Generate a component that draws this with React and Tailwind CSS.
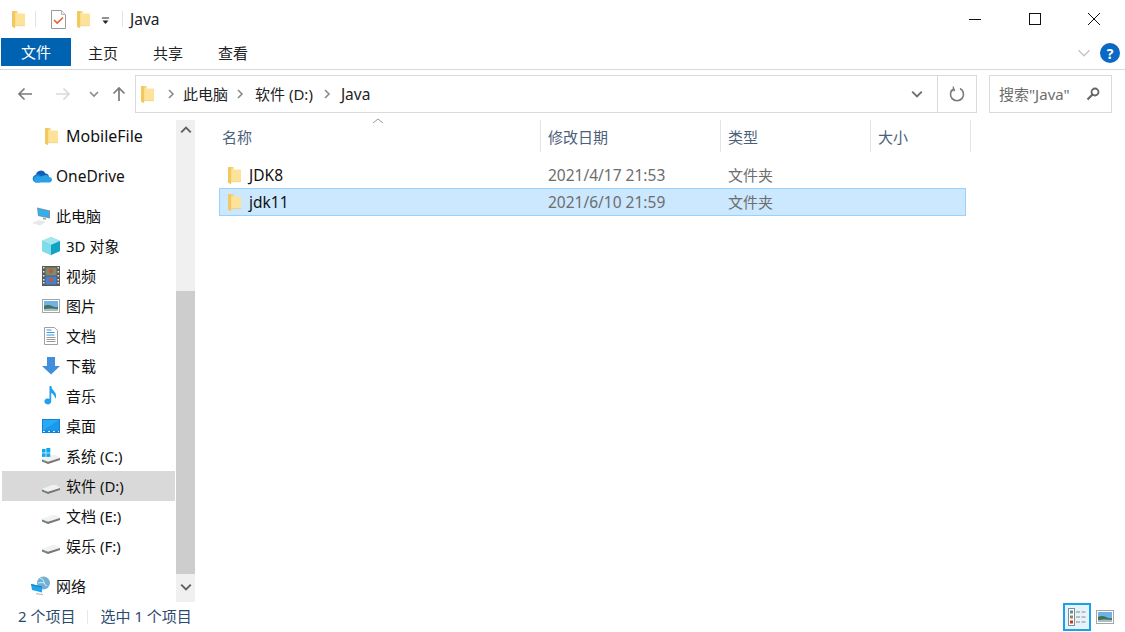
import React from "react";

const FONT = "font-['Noto_Sans','Noto_Sans_CJK_SC',sans-serif]";

function Folder({ className = "" }) {
  return (
    <svg width="13" height="17" viewBox="0 0 13 17" className={`shrink-0 ${className}`}>
      <path d="M3 2.500h9.500a.5.5 0 0 1 .5.500v11a.5.5 0 0 1-.5.5H3z" fill="#fde39a" />
      <path d="M0 .6Q0 0 .6 0H5.500v2.500H3V14.500h9.500q.5 0 .5-.5v.5H3V17L.6 16Q0 15.800 0 15.200z" fill="#f7d573" />
      <path d="M0 .6Q0 0 .6 0H3.200V17L.6 16Q0 15.800 0 15.200z" fill="#f3c95f" />
      <path d="M3.200 14.500H13v.6H3.200z" fill="#ecc25a" />
    </svg>
  );
}

function CheckDoc() {
  return (
    <svg width="15" height="19" viewBox="0 0 15 19" className="shrink-0">
      <path d="M.5.500h10l4 4v14H.5z" fill="#fff" stroke="#9a9a9a" />
      <path d="M10.500.500v4h4" fill="#eee" stroke="#b5b5b5" />
      <path d="M3 10l3.200 3L12 7.500" fill="none" stroke="#e8602c" strokeWidth="1.700" />
    </svg>
  );
}

function Chevron({ color = "#8a8a8a", dir = "right", size = 10, sw = 1.6 }) {
  const d = {
    right: "M3 1l4 4-4 4",
    down: "M1 3l4 4 4-4",
    up: "M1 7l4-4 4 4",
  }[dir];
  return (
    <svg width={size} height={size} viewBox="0 0 10 10" className="shrink-0">
      <path d={d} fill="none" stroke={color} strokeWidth={sw} />
    </svg>
  );
}

function Arrow({ color, rot = 0, size = 16 }) {
  return (
    <svg width={size} height={size} viewBox="0 0 16 16" style={{ transform: `rotate(${rot}deg)` }} className="shrink-0">
      <path d="M15 8H2M7.500 2.500L2 8l5.500 5.500" fill="none" stroke={color} strokeWidth="1.700" />
    </svg>
  );
}

function Drive({ win }) {
  return (
    <svg width="20" height="22" viewBox="0 0 20 22" className="shrink-0">
      <path d="M1 14L11 10h4l4 2.500V15L7 19 1 16.500z" fill="#f1f1f1" />
      <path d="M1 14.500l6 2.300L19 13v2L7 19 1 16.500z" fill="#777" />
      <path d="M3.500 16l2 .8v1l-2-.8z" fill="#3fbf4f" />
      {win && (
        <g fill="#12a5f0">
          <rect x="1" y="4" width="3.600" height="3.600" />
          <rect x="5.300" y="3" width="4" height="4.600" />
          <rect x="1" y="8.300" width="3.600" height="3.600" />
          <rect x="5.300" y="8.300" width="4" height="3.600" />
        </g>
      )}
    </svg>
  );
}

const icons = {
  folder: <Folder />,
  cloud: (
    <svg width="21" height="14" viewBox="0 0 21 14" className="shrink-0">
      <path d="M5 7a5 5 0 0 1 9.500-2.500A4 4 0 0 1 18 8l-8 2z" fill="#0f5fb5" />
      <path d="M4.500 13.500A4 4 0 0 1 4 6a4 4 0 0 1 5.500 1l4 2-5 4.500z" fill="#1a85d6" />
      <path d="M4.500 13.500H18a2.700 2.700 0 0 0 .5-5.400A4 4 0 0 0 13 6.500a5 5 0 0 0-4 1.500 3.500 3.500 0 0 0-4.500 5.500z" fill="#2aa0e6" />
    </svg>
  ),
  pc: (
    <svg width="20" height="19" viewBox="0 0 20 19" className="shrink-0">
      <path d="M6 .5l13 3v8L7 9z" fill="#7f8f9c" />
      <path d="M7 1.700l11 2.500v6L7 8z" fill="#2fb0f0" />
      <path d="M12 10.500l3 .7v1.500l-3-.5z" fill="#9aa3a9" />
      <path d="M1 16l7-3 7 2-6 3.500z" fill="#e6e8ea" />
    </svg>
  ),
  cube: (
    <svg width="18" height="18" viewBox="0 0 18 18" className="shrink-0">
      <path d="M9 0l9 4v10l-9 4-9-4V4z" fill="#4fc6e0" />
      <path d="M9 0l9 4-9 4-9-4z" fill="#a4e6f0" />
      <path d="M0 4l9 4v10l-9-4z" fill="#7fdcea" />
      <path d="M18 4L9 8v10l9-4z" fill="#13a3c2" />
    </svg>
  ),
  film: (
    <svg width="18" height="20" viewBox="0 0 18 20" className="shrink-0">
      <rect width="18" height="20" fill="#5a5a5a" />
      <rect x="3.500" y="1.500" width="11" height="8" fill="#7d8c6a" />
      <rect x="3.500" y="10.500" width="11" height="8" fill="#3f82d8" />
      <circle cx="9" cy="5" r="2.200" fill="#c8553d" />
      <circle cx="9" cy="14" r="2.200" fill="#c8553d" />
      <g fill="#e9e9e9">
        {[2, 6, 10, 14, 17].map((y) => (
          <g key={y}>
            <rect x="1" y={y - 1} width="1.500" height="1.500" />
            <rect x="15.500" y={y - 1} width="1.500" height="1.500" />
          </g>
        ))}
      </g>
    </svg>
  ),
  pic: (
    <svg width="18" height="14" viewBox="0 0 18 14" className="shrink-0">
      <rect x=".5" y=".5" width="17" height="13" fill="#fff" stroke="#a5a5a5" />
      <rect x="2" y="2" width="14" height="10" fill="#6fb2e6" />
      <path d="M2 7q4-2 8 0t6 1v4H2z" fill="#466e58" />
      <path d="M2 10q6-1 14 0v2H2z" fill="#a7c0c4" />
    </svg>
  ),
  doc: (
    <svg width="14" height="18" viewBox="0 0 14 18" className="shrink-0">
      <path d="M.5.500h10l3 3v14H.5z" fill="#fff" stroke="#a0a0a0" />
      <path d="M2.500 3h5M2.500 5.500h8M2.500 8h8" stroke="#2f9be0" strokeWidth="1.200" />
      <path d="M2.500 10.500h9M2.500 12.500h9M2.500 14.500h9" stroke="#9a9a9a" />
    </svg>
  ),
  down: (
    <svg width="18" height="18" viewBox="0 0 18 18" className="shrink-0">
      <path d="M5 0h8v9h5l-9 8.500L0 9h5z" fill="#3f8fdc" />
    </svg>
  ),
  music: (
    <svg width="14" height="20" viewBox="0 0 14 20" className="shrink-0">
      <path d="M5.500 0h1.700q.5 3.500 3.500 6 2.500 3 .5 7-.2-4-4-6.300V15.500a3.400 3 0 1 1-1.700-2.700z" fill="#1fa1ec" />
    </svg>
  ),
  desk: (
    <svg width="18" height="14" viewBox="0 0 18 14" className="shrink-0">
      <rect width="18" height="14" fill="#0f83d8" />
      <rect x="1" y="1" width="16" height="10.500" fill="#2aa9f5" />
      <path d="M1 11.500L17 1v10.500z" fill="#1b98ea" />
      <path d="M1 12.500h16" stroke="#cfeafc" strokeDasharray="2 3" />
    </svg>
  ),
  net: (
    <svg width="20" height="20" viewBox="0 0 20 20" className="shrink-0">
      <circle cx="12.500" cy="7" r="6.500" fill="#6fb0d4" />
      <path d="M9 2q4 1 4 4t3 4M7 7q3-1 6 0" stroke="#d5ebf5" fill="none" />
      <path d="M0 8l11 2.500v6L1 14z" fill="#1fa5ea" />
      <path d="M0 8l11 2.500v1L.2 9.200z" fill="#137fc0" />
      <path d="M5 17l7 1v1.200l-7-1z" fill="#b7c0c7" />
    </svg>
  ),
  c: <Drive win />,
  d: <Drive />,
};

const nav = [
  { label: "MobileFile", icon: "folder", depth: 2, mb: "mb-[10px]", size: "text-[16px]" },
  { label: "OneDrive", icon: "cloud", depth: 1, mb: "mb-[10px]", size: "translate-y-px text-[15.5px]" },
  { label: "此电脑", icon: "pc", depth: 1 },
  { label: "3D 对象", icon: "cube", depth: 2 },
  { label: "视频", icon: "film", depth: 2 },
  { label: "图片", icon: "pic", depth: 2 },
  { label: "文档", icon: "doc", depth: 2 },
  { label: "下载", icon: "down", depth: 2 },
  { label: "音乐", icon: "music", depth: 2 },
  { label: "桌面", icon: "desk", depth: 2 },
  { label: "系统 (C:)", icon: "c", depth: 2 },
  { label: "软件 (D:)", icon: "d", depth: 2, active: true },
  { label: "文档 (E:)", icon: "d", depth: 2 },
  { label: "娱乐 (F:)", icon: "d", depth: 2, mb: "mb-[10px]" },
  { label: "网络", icon: "net", depth: 1 },
];

function NavRow({ item }) {
  return (
    <div
      className={`flex h-[30px] items-center ${item.mb || ""} ${item.active ? "bg-[#d9d9d9]" : ""} ${
        item.depth === 2 ? "pl-[37px]" : "pl-[27px]"
      }`}
    >
      <span className="flex w-[24px] shrink-0 items-center justify-center">{icons[item.icon]}</span>
      <span className={`ml-[3px] whitespace-nowrap text-[#111] ${item.size || "text-[15px]"}`}>{item.label}</span>
    </div>
  );
}

function Sep({ className = "" }) {
  return <div className={`w-px shrink-0 bg-[#e3e3e3] ${className}`} />;
}

function HeaderCell({ label, w, children }) {
  return (
    <div className={`relative flex h-[32px] shrink-0 items-center border-r border-[#e5e5e5] pt-[2px] text-[15px] text-[#4c607a] ${w}`}>
      {label}
      {children}
    </div>
  );
}

function FileRow({ name, date, selected }) {
  return (
    <div
      className={`flex h-[28px] w-[747px] items-center border ${
        selected ? "border-[#99d1ff] bg-[#cce8ff]" : "border-transparent"
      }`}
    >
      <span className="ml-[6px] flex w-[16px] shrink-0 justify-center"><Folder /></span>
      <span className="ml-[7px] w-[299px] shrink-0 translate-y-px text-[15.5px] text-[#111]">{name}</span>
      <span className="w-[180px] shrink-0 translate-y-px whitespace-nowrap text-[15.5px] text-[#6d6d6d]">{date}</span>
      <span className="text-[15px] text-[#6d6d6d]">文件夹</span>
    </div>
  );
}

export default function App() {
  return (
    <div className={`flex h-[632px] w-[1125px] flex-col overflow-hidden bg-white ${FONT}`}>
      {/* Title bar */}
      <div className="flex h-[38px] shrink-0 items-center pl-[12px]">
        <Folder />
        <Sep className="ml-[10px] h-[16px] bg-[#a0a0a0]" />
        <span className="ml-[15px]"><CheckDoc /></span>
        <span className="ml-[11px]"><Folder /></span>
        <svg width="8" height="8" viewBox="0 0 8 8" className="ml-[12px] mt-[4px]">
          <path d="M0 1h7" stroke="#222" />
          <path d="M.5 3.500h6L3.500 7z" fill="#222" />
        </svg>
        <Sep className="ml-[12px] h-[16px] bg-[#a0a0a0]" />
        <span className="ml-[7px] translate-y-px text-[15.5px] text-[#222]">Java</span>
        <div className="ml-auto flex items-center">
          <svg width="14" height="14" viewBox="0 0 14 14" className="mr-[46px]"><path d="M1 7.500h12" stroke="#111" /></svg>
          <svg width="14" height="14" viewBox="0 0 14 14" className="mr-[45px]"><rect x="1.500" y="1.500" width="11" height="11" fill="none" stroke="#111" /></svg>
          <svg width="14" height="14" viewBox="0 0 14 14" className="mr-[24px]"><path d="M1 1l12 12M13 1L1 13" stroke="#111" /></svg>
        </div>
      </div>

      {/* Ribbon tabs */}
      <div className="flex h-[32px] shrink-0 items-start border-b border-[#dadada] pl-[1px]">
        <div className="flex h-[28px] w-[70px] items-center justify-center bg-[#0063b1] text-[15px] text-white">文件</div>
        <div className="flex h-[31px] w-[64px] items-center justify-center text-[15px] text-[#222]">主页</div>
        <div className="flex h-[31px] w-[66px] items-center justify-center text-[15px] text-[#222]">共享</div>
        <div className="flex h-[31px] w-[64px] items-center justify-center text-[15px] text-[#222]">查看</div>
        <div className="ml-auto flex h-[30px] items-center pr-[5px]">
          <Chevron color="#c4c4c4" dir="down" size={14} sw={0.9} />
          <span className="ml-[9px] flex h-[20px] w-[20px] items-center justify-center rounded-full bg-[#0b68c4] text-[14px] font-bold text-white">?</span>
        </div>
      </div>

      {/* Address row */}
      <div className="flex h-[50px] shrink-0 items-start pt-[5px]">
        <div className="flex h-[38px] w-[135px] shrink-0 items-center pl-[17px]">
          <Arrow color="#7a7a7a" />
          <span className="ml-[22px]"><Arrow color="#d9d9d9" rot={180} /></span>
          <span className="ml-[18px]"><Chevron color="#8a8a8a" dir="down" size={10} /></span>
          <span className="ml-[12px]"><Arrow color="#7a7a7a" rot={90} /></span>
        </div>
        <div className="flex h-[38px] w-[842px] shrink-0 items-center border border-[#dadada] pl-[5px]">
          <Folder />
          <span className="ml-[12px]"><Chevron /></span>
          <span className="ml-[7px] text-[15px] text-[#222]">此电脑</span>
          <span className="ml-[7px]"><Chevron /></span>
          <span className="ml-[10px] text-[15px] text-[#222]">软件 (D:)</span>
          <span className="ml-[9px]"><Chevron /></span>
          <span className="ml-[9px] translate-y-px text-[15.5px] text-[#222]">Java</span>
          <span className="ml-auto mr-[14px]"><Chevron color="#6f6f6f" dir="down" size={12} /></span>
          <div className="flex h-full w-[39px] items-center justify-center border-l border-[#dadada]">
            <svg width="16" height="16" viewBox="0 0 16 16">
              <path d="M5 2.500a6.500 6.500 0 1 0 6 0" fill="none" stroke="#7a7a7a" strokeWidth="1.600" />
              <path d="M4 .5l1.500 4-4 .5" fill="none" stroke="#7a7a7a" strokeWidth="1.200" />
            </svg>
          </div>
        </div>
        <div className="ml-[12px] flex h-[38px] w-[123px] shrink-0 items-center border border-[#dadada] pl-[9px] pr-[11px] text-[15px] text-[#6d6d6d]">
          <span className="whitespace-nowrap">搜索"Java"</span>
          <svg width="14" height="14" viewBox="0 0 14 14" className="ml-auto">
            <circle cx="9" cy="5" r="3.500" fill="none" stroke="#666" strokeWidth="1.800" />
            <path d="M6.500 7.500L1.500 12.500" stroke="#666" strokeWidth="2.200" />
          </svg>
        </div>
      </div>

      {/* Body */}
      <div className="flex min-h-0 flex-1">
        <div className="flex w-[196px] shrink-0">
          <div className="w-[175px] shrink-0 overflow-hidden pl-[2px] pt-[1px]">
            {nav.map((n) => (
              <NavRow key={n.label + n.icon} item={n} />
            ))}
          </div>
          <div className="ml-[1px] flex w-[19px] shrink-0 flex-col bg-[#f0f0f0]">
            <div className="flex h-[20px] items-center justify-center"><Chevron color="#606060" dir="up" size={12} /></div>
            <div className="mt-[151px] h-[283px] bg-[#cdcdcd]" />
            <div className="flex h-[26px] items-center justify-center"><Chevron color="#606060" dir="down" size={12} /></div>
          </div>
        </div>
        <div className="flex-1 pl-[20px]">
          <div className="flex">
            <HeaderCell label="名称" w="w-[325px] pl-[6px]">
              <span className="absolute left-[156px] top-[-3px]">
                <svg width="12" height="8" viewBox="0 0 12 8"><path d="M1 6l5-4 5 4" fill="none" stroke="#9a9a9a" /></svg>
              </span>
            </HeaderCell>
            <HeaderCell label="修改日期" w="w-[180px] pl-[7px]" />
            <HeaderCell label="类型" w="w-[150px] pl-[7px]" />
            <HeaderCell label="大小" w="w-[100px] pl-[7px]" />
          </div>
          <div className="pl-[3px] pt-[9px]">
            <FileRow name="JDK8" date="2021/4/17 21:53" />
            <div className="-mt-px">
              <FileRow name="jdk11" date="2021/6/10 21:59" selected />
            </div>
          </div>
        </div>
      </div>

      {/* Status bar */}
      <div className="flex h-[30px] shrink-0 items-center pl-[18px] text-[15px] text-[#2c4a6e]">
        <span className="-translate-y-px">2 个项目</span>
        <Sep className="ml-[12px] h-[14px] bg-[#e8e8e8]" />
        <span className="ml-[12px] -translate-y-px">选中 1 个项目</span>
        <div className="ml-auto mr-[11px] flex items-center">
          <div className="flex h-[28px] w-[28px] items-center justify-center border-2 border-[#1ea0e6] bg-[#e5f3fb]">
            <svg width="18" height="18" viewBox="0 0 18 18">
              <rect x=".5" y=".5" width="6" height="17" fill="#fff" stroke="#8a8a8a" />
              <rect x="2" y="2.500" width="3" height="3" fill="#4a8fb5" />
              <rect x="2" y="7.500" width="3" height="3" fill="#8a8a50" />
              <rect x="2" y="12.500" width="3" height="3" fill="#c0392b" />
              <path d="M8 4h4M13.500 4h4M8 9h4M13.500 9h4M8 14h4M13.500 14h4" stroke="#8a8a8a" />
            </svg>
          </div>
          <svg width="18" height="14" viewBox="0 0 18 14" className="ml-[5px]">
            <rect x=".5" y=".5" width="17" height="13" fill="#fff" stroke="#a5a5a5" />
            <rect x="2" y="2" width="14" height="10" fill="#6fb2e6" />
            <path d="M2 7q4-2 8 0t6 1v4H2z" fill="#466e58" />
            <path d="M2 10q6-1 14 0v2H2z" fill="#a7c0c4" />
          </svg>
        </div>
      </div>
    </div>
  );
}
